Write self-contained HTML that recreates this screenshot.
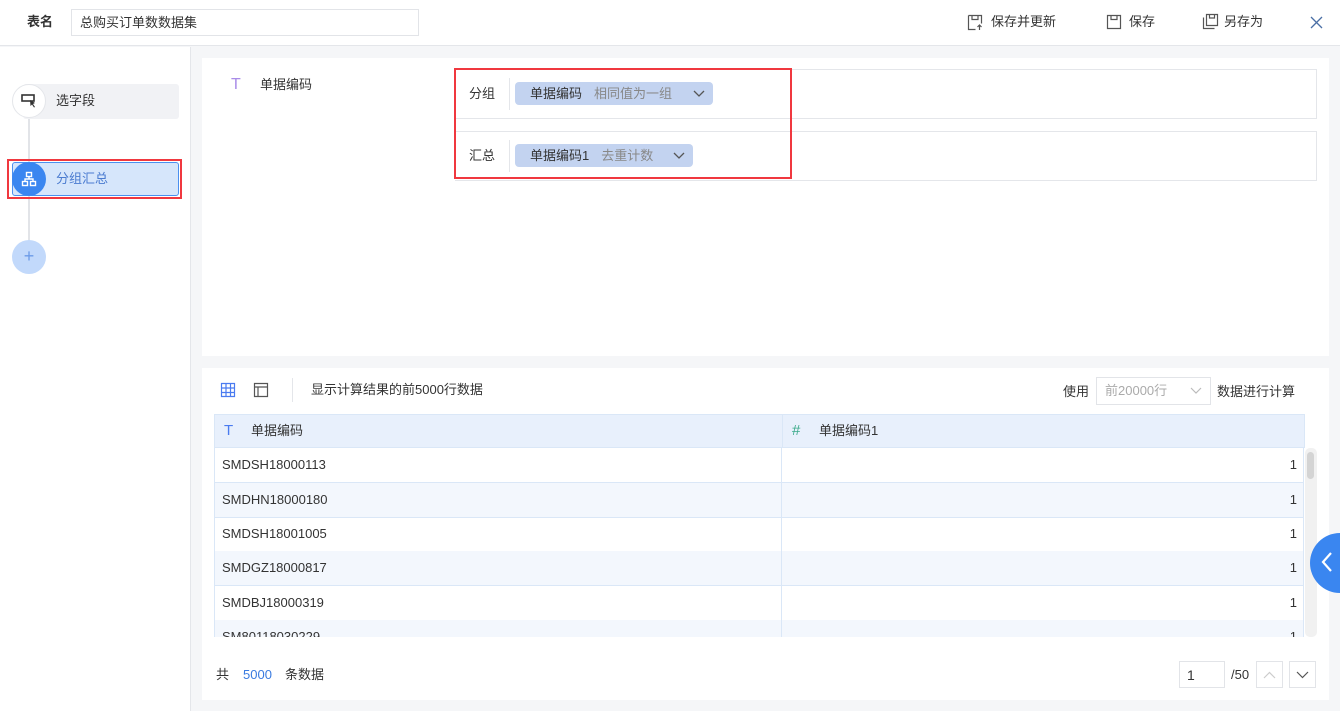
<!DOCTYPE html>
<html><head><meta charset="utf-8"><style>
*{box-sizing:border-box;margin:0;padding:0}
body{width:1340px;height:711px;overflow:hidden;background:#f5f6f8;font-family:"Liberation Sans","Noto Sans CJK SC",sans-serif;font-size:13px;line-height:16px;color:#333;position:relative}
.abs{position:absolute}
.top{left:0;top:0;width:1340px;height:46px;background:#fff;border-bottom:1px solid #e4e6ea}
.side{left:0;top:47px;width:191px;height:664px;background:#fff;border-right:1px solid #e4e6ea}
.panel{background:#fff}
.chip{background:#c3d3f0;border-radius:4px;height:23px;line-height:23px;padding:0 10px 0 15px;color:#333}
.chip span{color:#888;margin-left:12px}
.row{left:214px;width:1090px;height:35px;border-bottom:1px solid #dae7f7;line-height:34px}
.row .a{position:absolute;left:0;top:0;width:568px;height:34px;border-left:1px solid #dae7f7;border-right:1px solid #dae7f7;padding-left:7px}
.row .b{position:absolute;left:568px;top:0;width:522px;height:34px;border-right:1px solid #dae7f7;text-align:right;padding-right:6px}
.alt{background:#f3f7fd}
</style></head><body>
<div class="abs top">
  <div class="abs" style="left:27px;top:14px;font-weight:bold">表名</div>
  <div class="abs" style="left:71px;top:9px;width:348px;height:27px;border:1px solid #e2e4e8;padding-left:8px;line-height:25px">总购买订单数数据集</div>
  <svg class="abs" style="left:967px;top:14px" width="17" height="17" viewBox="0 0 17 17" fill="none" stroke="#555" stroke-width="1.2"><path d="M1.5 1.5h13v8M1.5 1.5v14h7M5 1.5v4h6v-4"/><path d="M12.5 16v-5M10.5 13l2-2 2 2"/></svg>
  <div class="abs" style="left:991px;top:14px">保存并更新</div>
  <svg class="abs" style="left:1106px;top:14px" width="16" height="16" viewBox="0 0 16 16" fill="none" stroke="#555" stroke-width="1.2"><path d="M1.5 1.5h13v13h-13zM5 1.5v4h6v-4"/></svg>
  <div class="abs" style="left:1129px;top:14px">保存</div>
  <svg class="abs" style="left:1202px;top:13px" width="17" height="17" viewBox="0 0 17 17" fill="none" stroke="#555" stroke-width="1.2"><path d="M4.5 1.5h11v11h-11zM7.5 1.5v3.5h5v-3.5M1.5 4.5v11h11"/></svg>
  <div class="abs" style="left:1224px;top:14px">另存为</div>
  <svg class="abs" style="left:1310px;top:16px" width="13" height="13" viewBox="0 0 13 13" stroke="#4a6fa5" stroke-width="1.3"><path d="M1 1l11 11M12 1L1 12"/></svg>
</div>
<div class="abs side">
  <div class="abs" style="left:28px;top:55px;width:2px;height:150px;background:#e2e4e8"></div>
  <div class="abs" style="left:23px;top:37px;width:156px;height:35px;background:#f1f2f5;border-radius:3px"></div>
  <div class="abs" style="left:12px;top:37px;width:34px;height:34px;border-radius:50%;background:#fff;border:1px solid #e4e6ea"></div>
  <svg class="abs" style="left:21px;top:47px" width="16" height="14" viewBox="0 0 16 14"><rect x="1" y="1" width="12" height="6" fill="none" stroke="#333" stroke-width="1.6"/><path d="M9 6l5 3-2 1 2 3-1 .5-2-3-1.5 1.5z" fill="#333"/></svg>
  <div class="abs" style="left:56px;top:46px">选字段</div>
  <div class="abs" style="left:7px;top:112px;width:175px;height:40px;border:2px solid #f0383f"></div>
  <div class="abs" style="left:12px;top:115px;width:167px;height:34px;background:#d6e6fb;border:1px solid #4a90f0;border-radius:3px"></div>
  <div class="abs" style="left:12px;top:115px;width:34px;height:34px;border-radius:50%;background:#3a86f0"></div>
  <svg class="abs" style="left:21px;top:124px" width="16" height="16" viewBox="0 0 16 16" fill="none" stroke="#fff" stroke-width="1.4"><rect x="5.5" y="1.5" width="5" height="4"/><rect x="1.5" y="10.5" width="5" height="4"/><rect x="9.5" y="10.5" width="5" height="4"/><path d="M8 5.5v2.5M4 10.5v-2.5h8v2.5"/></svg>
  <div class="abs" style="left:56px;top:124px;color:#4a7bd0">分组汇总</div>
  <div class="abs" style="left:12px;top:193px;width:34px;height:34px;border-radius:50%;background:#c2d9fb;color:#6c9be8;text-align:center;line-height:32px;font-size:18px">+</div>
</div>
<div class="abs panel" style="left:202px;top:58px;width:1127px;height:298px">
  <div class="abs" style="left:29px;top:19px;color:#a98ce8;font-size:16px">T</div>
  <div class="abs" style="left:58px;top:19px">单据编码</div>
  <div class="abs" style="left:253px;top:11px;width:862px;height:50px;border:1px solid #e4e6ea;border-left:none"></div>
  <div class="abs" style="left:253px;top:73px;width:862px;height:50px;border:1px solid #e4e6ea;border-left:none"></div>
  <div class="abs" style="left:307px;top:20px;width:1px;height:32px;background:#e4e6ea"></div>
  <div class="abs" style="left:307px;top:82px;width:1px;height:32px;background:#e4e6ea"></div>
  <div class="abs" style="left:267px;top:28px">分组</div>
  <div class="abs" style="left:267px;top:90px">汇总</div>
  <div class="abs chip" style="left:313px;top:24px;width:198px">单据编码<span>相同值为一组</span></div>
  <svg class="abs" style="left:491px;top:32px" width="12" height="8" viewBox="0 0 12 8" fill="none" stroke="#555" stroke-width="1.3"><path d="M1 1l5 5 5-5"/></svg>
  <div class="abs chip" style="left:313px;top:86px;width:178px">单据编码1<span>去重计数</span></div>
  <svg class="abs" style="left:471px;top:94px" width="12" height="8" viewBox="0 0 12 8" fill="none" stroke="#555" stroke-width="1.3"><path d="M1 1l5 5 5-5"/></svg>
  <div class="abs" style="left:252px;top:10px;width:338px;height:111px;border:2px solid #f0383f"></div>
</div>
<div class="abs panel" style="left:202px;top:368px;width:1127px;height:332px"></div>
<svg class="abs" style="left:220px;top:382px" width="16" height="16" viewBox="0 0 16 16" fill="none" stroke="#4a7bf0" stroke-width="1.2"><path d="M1.5 1.5h13v13h-13zM1.5 6h13M1.5 10.5h13M6 1.5v13M10.5 1.5v13"/></svg>
<svg class="abs" style="left:253px;top:382px" width="16" height="16" viewBox="0 0 16 16" fill="none" stroke="#555" stroke-width="1.2"><path d="M1.5 1.5h13v13h-13zM1.5 5h13M5 5v9.5"/></svg>
<div class="abs" style="left:292px;top:378px;width:1px;height:24px;background:#e4e6ea"></div>
<div class="abs" style="left:311px;top:382px">显示计算结果的前5000行数据</div>
<div class="abs" style="left:1063px;top:384px">使用</div>
<div class="abs" style="left:1096px;top:377px;width:115px;height:28px;border:1px solid #e2e4e8;color:#aaa;line-height:26px;padding-left:8px">前20000行</div>
<svg class="abs" style="left:1190px;top:387px" width="12" height="8" viewBox="0 0 12 8" fill="none" stroke="#bbb" stroke-width="1.2"><path d="M1 1l5 5 5-5"/></svg>
<div class="abs" style="left:1217px;top:384px">数据进行计算</div>
<div class="abs" style="left:214px;top:414px;width:1091px;height:34px;background:#e8f0fc;border:1px solid #dae7f7"></div>
<div class="abs" style="left:782px;top:414px;width:1px;height:34px;background:#dae7f7"></div>
<div class="abs" style="left:224px;top:423px;color:#4a7bf0;font-size:15px">T</div>
<div class="abs" style="left:251px;top:423px">单据编码</div>
<div class="abs" style="left:792px;top:423px;color:#3aaa8a;font-size:15px">#</div>
<div class="abs" style="left:819px;top:423px">单据编码1</div>
<div class="abs" style="left:214px;top:448px;width:1091px;height:189px;overflow:hidden">
 <div style="position:relative">
  <div class="abs row" style="left:0;top:0"><div class="a">SMDSH18000113</div><div class="b">1</div></div>
  <div class="abs row alt" style="left:0;top:35px"><div class="a">SMDHN18000180</div><div class="b">1</div></div>
  <div class="abs row" style="left:0;top:69px"><div class="a">SMDSH18001005</div><div class="b">1</div></div>
  <div class="abs row alt" style="left:0;top:103px"><div class="a">SMDGZ18000817</div><div class="b">1</div></div>
  <div class="abs row" style="left:0;top:138px"><div class="a">SMDBJ18000319</div><div class="b">1</div></div>
  <div class="abs row alt" style="left:0;top:172px"><div class="a">SM80118030229</div><div class="b">1</div></div>
 </div>
</div>
<div class="abs" style="left:1305px;top:448px;width:12px;height:189px;background:#f1f1f1;border-radius:5px"></div>
<div class="abs" style="left:1307px;top:452px;width:7px;height:27px;background:#d4d4d4;border-radius:4px"></div>
<div class="abs" style="left:216px;top:667px">共</div>
<div class="abs" style="left:243px;top:667px;color:#3a7be0">5000</div>
<div class="abs" style="left:285px;top:667px">条数据</div>
<div class="abs" style="left:1179px;top:661px;width:46px;height:27px;border:1px solid #e2e4e8;padding-left:7px;line-height:26px;font-size:14px">1</div>
<div class="abs" style="left:1231px;top:667px">/50</div>
<div class="abs" style="left:1256px;top:661px;width:27px;height:27px;border:1px solid #e2e4e8"></div>
<svg class="abs" style="left:1263px;top:671px" width="13" height="8" viewBox="0 0 13 8" fill="none" stroke="#ccc" stroke-width="1.2"><path d="M1 7l5.5-5.5L12 7"/></svg>
<div class="abs" style="left:1289px;top:661px;width:27px;height:27px;border:1px solid #e2e4e8"></div>
<svg class="abs" style="left:1296px;top:671px" width="13" height="8" viewBox="0 0 13 8" fill="none" stroke="#555" stroke-width="1.2"><path d="M1 1l5.5 5.5L12 1"/></svg>
<div class="abs" style="left:1310px;top:533px;width:60px;height:60px;border-radius:50%;background:#3a86f0"></div>
<svg class="abs" style="left:1320px;top:551px" width="14" height="22" viewBox="0 0 14 22" fill="none" stroke="#fff" stroke-width="2.2"><path d="M11 2L3 11l8 9"/></svg>
</body></html>
